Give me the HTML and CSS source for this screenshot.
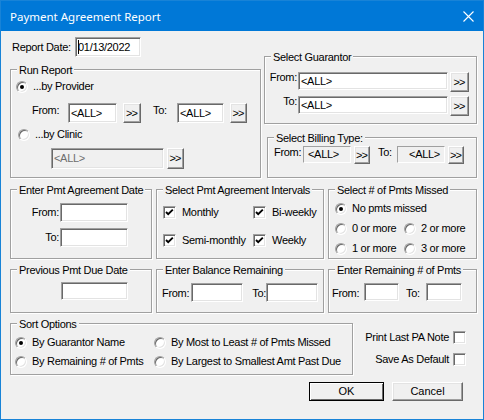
FILE: index.html
```html
<!DOCTYPE html>
<html>
<head>
<meta charset="utf-8">
<title>Payment Agreement Report</title>
<link rel="stylesheet" href="styles.css">
</head>
<body>
<div class="window">
  <div class="titlebar">
    <span class="title">Payment Agreement Report</span>
    <svg class="close" width="11" height="11" viewBox="0 0 11 11"><path d="M0.5 0.5L10.5 10.5M10.5 0.5L0.5 10.5" stroke="#fff" stroke-width="1.1" fill="none"/></svg>
  </div>
  <div class="content">
    <div class="top">
      <div class="left">
        <div class="date-row">
          <span class="date-label">Report Date:</span>
          <span class="field date"><span class="caret"></span>01/13/2022</span>
        </div>
        <div class="group run">
          <span class="legend">Run Report</span>
          <div class="opt prov"><span class="radio on"></span><span>...by Provider</span></div>
          <div class="prov-row">
            <span class="lbl l-from1">From:</span>
            <span class="field w-p1">&lt;ALL&gt;</span>
            <span class="btn b-p1">&gt;&gt;</span>
            <span class="lbl l-to1">To:</span>
            <span class="field w-p2">&lt;ALL&gt;</span>
            <span class="btn b-p2">&gt;&gt;</span>
          </div>
          <div class="opt clinic"><span class="radio"></span><span>...by Clinic</span></div>
          <div class="clinic-row">
            <span class="field disabled w-clinic">&lt;ALL&gt;</span>
            <span class="btn b-clinic">&gt;&gt;</span>
          </div>
        </div>
      </div>
      <div class="right">
        <div class="group guar">
          <span class="legend">Select Guarantor</span>
          <div class="g-row">
            <span class="lbl g-lbl">From:</span>
            <span class="field w-g">&lt;ALL&gt;</span>
            <span class="btn b-g">&gt;&gt;</span>
          </div>
          <div class="g-row g-row2">
            <span class="lbl g-lbl">To:</span>
            <span class="field w-g">&lt;ALL&gt;</span>
            <span class="btn b-g">&gt;&gt;</span>
          </div>
        </div>
        <div class="group billing">
          <span class="legend">Select Billing Type:</span>
          <div class="bt-row">
            <span class="lbl bt-from">From:</span>
            <span class="field ro w-bt">&lt;ALL&gt;</span>
            <span class="btn b-bt">&gt;&gt;</span>
            <span class="lbl bt-to">To:</span>
            <span class="field ro w-bt right-text">&lt;ALL&gt;</span>
            <span class="btn b-bt">&gt;&gt;</span>
          </div>
        </div>
      </div>
    </div>

    <div class="row2">
      <div class="group c1">
        <span class="legend">Enter Pmt Agreement Date</span>
        <div class="pd-row"><span class="lbl pd-lbl">From:</span><span class="field w-pd"></span></div>
        <div class="pd-row pd-row2"><span class="lbl pd-lbl">To:</span><span class="field w-pd"></span></div>
      </div>
      <div class="group c2">
        <span class="legend">Select Pmt Agreement Intervals</span>
        <div class="intervals">
          <div class="opt"><span class="check on"><svg width="9" height="9" viewBox="0 0 9 9"><polyline points="1,4 3.2,6.2 7.8,1.6" fill="none" stroke="#000" stroke-width="1.9"/></svg></span><span>Monthly</span></div>
          <div class="opt"><span class="check on"><svg width="9" height="9" viewBox="0 0 9 9"><polyline points="1,4 3.2,6.2 7.8,1.6" fill="none" stroke="#000" stroke-width="1.9"/></svg></span><span>Bi-weekly</span></div>
          <div class="opt"><span class="check on"><svg width="9" height="9" viewBox="0 0 9 9"><polyline points="1,4 3.2,6.2 7.8,1.6" fill="none" stroke="#000" stroke-width="1.9"/></svg></span><span>Semi-monthly</span></div>
          <div class="opt"><span class="check on"><svg width="9" height="9" viewBox="0 0 9 9"><polyline points="1,4 3.2,6.2 7.8,1.6" fill="none" stroke="#000" stroke-width="1.9"/></svg></span><span>Weekly</span></div>
        </div>
      </div>
      <div class="group c3">
        <span class="legend">Select # of Pmts Missed</span>
        <div class="missed">
          <div class="opt span2"><span class="radio on"></span><span>No pmts missed</span></div>
          <div class="opt"><span class="radio"></span><span>0 or more</span></div>
          <div class="opt"><span class="radio"></span><span>2 or more</span></div>
          <div class="opt"><span class="radio"></span><span>1 or more</span></div>
          <div class="opt"><span class="radio"></span><span>3 or more</span></div>
        </div>
      </div>
    </div>

    <div class="row3">
      <div class="group c1">
        <span class="legend">Previous Pmt Due Date</span>
        <span class="field w-prev"></span>
      </div>
      <div class="group c2">
        <span class="legend">Enter Balance Remaining</span>
        <div class="r3-row bal">
          <span class="lbl bal-from">From:</span>
          <span class="field w-bal"></span>
          <span class="lbl bal-to">To:</span>
          <span class="field w-bal"></span>
        </div>
      </div>
      <div class="group c3">
        <span class="legend">Enter Remaining # of Pmts</span>
        <div class="r3-row rem">
          <span class="lbl rem-from">From:</span>
          <span class="field w-rem"></span>
          <span class="lbl rem-to">To:</span>
          <span class="field w-rem2"></span>
        </div>
      </div>
    </div>

    <div class="bottom">
      <div class="group sort">
        <span class="legend">Sort Options</span>
        <div class="sort-grid">
          <div class="opt"><span class="radio on"></span><span>By Guarantor Name</span></div>
          <div class="opt"><span class="radio"></span><span>By Most to Least # of Pmts Missed</span></div>
          <div class="opt"><span class="radio"></span><span>By Remaining # of Pmts</span></div>
          <div class="opt"><span class="radio"></span><span>By Largest to Smallest Amt Past Due</span></div>
        </div>
      </div>
      <div class="extras">
        <div class="opt rtl"><span>Print Last PA Note</span><span class="check"></span></div>
        <div class="opt rtl second"><span>Save As Default</span><span class="check"></span></div>
      </div>
    </div>

    <div class="buttons">
      <span class="btn push default">OK</span>
      <span class="btn push">Cancel</span>
    </div>
  </div>
</div>
</body>
</html>
```

FILE: styles.css
```css
* { box-sizing: border-box; }
html, body { margin: 0; padding: 0; }
body {
  width: 484px; height: 420px; overflow: hidden;
  background: #f0f0f0;
  font-family: "Liberation Sans", Arial, sans-serif;
  font-size: 11px; line-height: 13px; color: #000;
  letter-spacing: -0.3px;
}
.window {
  width: 484px; height: 420px;
  border: 1px solid #1883d7;
  background: #f0f0f0;
}
.titlebar {
  height: 30px; background: #0078d7; color: #fff;
  display: flex; align-items: center; justify-content: space-between;
  padding: 0 9px 0 9px;
  font-family: "Noto Sans", "Liberation Sans", sans-serif;
  font-size: 11.5px; letter-spacing: 0;
}
.close { display: block; }
.content { padding: 0 6px 0 9px; }

/* generic controls */
.lbl { display: block; white-space: nowrap; flex: none; }
.field {
  display: flex; align-items: center; flex: none;
  background: #fff;
  border: 1px solid; border-color: #a0a0a0 #fff #fff #a0a0a0;
  box-shadow: inset 1px 1px 0 #696969, inset -1px -1px 0 #e3e3e3;
  padding: 0 2px; white-space: nowrap; overflow: hidden;
}
.field.ro { background: #f0f0f0; box-shadow: none; padding-left: 4px; }
.field.right-text { justify-content: flex-end; padding-right: 4px; }
.field.disabled { background: #f0f0f0; color: #6d6d6d; }
.btn {
  display: flex; align-items: center; justify-content: center; flex: none;
  background: #f0f0f0;
  border: 1px solid; border-color: #fff #696969 #696969 #fff;
  box-shadow: inset -1px -1px 0 #a0a0a0, inset 1px 1px 0 #e3e3e3;
  letter-spacing: -1px; padding-right: 1px;
}
.radio {
  display: block; flex: none; position: relative;
  width: 12px; height: 12px; border-radius: 50%;
  background: #fff;
  border: 1px solid; border-color: #a0a0a0 #fff #fff #a0a0a0;
  box-shadow: inset 1px 1px 0 #696969, inset -1px -1px 0 #e3e3e3;
}
.radio.on::after {
  content: ""; position: absolute; left: 3px; top: 3px;
  width: 4px; height: 4px; border-radius: 50%; background: #000;
}
.check {
  display: flex; align-items: center; justify-content: center; flex: none;
  width: 13px; height: 13px; background: #fff;
  border: 1px solid; border-color: #a0a0a0 #fff #fff #a0a0a0;
  box-shadow: inset 1px 1px 0 #696969, inset -1px -1px 0 #e3e3e3;
}
.check svg { display: block; }
.opt { display: flex; align-items: center; height: 13px; white-space: nowrap; }
.opt .radio + span { margin-left: 5px; }
.opt .check + span { margin-left: 6px; }

/* group boxes */
.group {
  position: relative; flex: none;
  border: 1px solid #a0a0a0;
  box-shadow: inset 1px 1px 0 #fff, 1px 1px 0 #fff;
}
.legend {
  position: absolute; top: -6px; left: 6px;
  padding: 0 2px; background: #f0f0f0; white-space: nowrap;
  line-height: 13px;
}

/* top area */
.top { display: flex; gap: 3px; }
.left { width: 251px; flex: none; }
.right { width: 213px; flex: none; }
.date-row { margin-top: 6px; height: 20px; display: flex; align-items: center; }
.date-label { margin-left: 2px; width: 63px; }
.field.date { width: 66px; height: 20px; padding-left: 2px; }
.caret { display: block; width: 1px; height: 14px; background: #000; margin-right: -1px; flex: none; }

.run { margin-top: 12px; width: 251px; height: 109px; }
.opt.prov { margin-top: 10px; padding-left: 5px; }
.prov-row { margin-top: 10px; height: 20px; display: flex; align-items: flex-start; padding-left: 21px; }
.prov-row .lbl { margin-top: 1px; }
.l-from1 { width: 36px; }
.w-p1 { width: 49px; height: 20px; }
.b-p1 { margin-left: 6px; width: 18px; height: 20px; }
.l-to1 { margin-left: 12px; width: 24px; }
.w-p2 { width: 47px; height: 20px; }
.b-p2 { margin-left: 6px; width: 17px; height: 20px; }
.opt.clinic { margin-top: 5px; padding-left: 7px; }
.clinic-row { margin-top: 7px; display: flex; padding-left: 40px; }
.w-clinic { width: 113px; height: 21px; }
.b-clinic { margin-left: 3px; width: 17px; height: 21px; }

.guar { margin-top: 25px; width: 213px; height: 68px; }
.g-row { margin-top: 15px; display: flex; align-items: flex-start; }
.g-row2 { margin-top: 4px; }
.g-lbl { width: 32px; text-align: right; margin-top: -1px; }
.w-g { margin-left: 1px; width: 150px; height: 18px; }
.b-g { margin-left: 2px; width: 19px; height: 20px; }

.billing { margin-top: 13px; margin-left: 3px; width: 210px; height: 41px; }
.bt-row { margin-top: 8px; padding-left: 6px; display: flex; align-items: flex-start; }
.bt-row .lbl { margin-top: 0; }
.bt-from { width: 29px; }
.w-bt { width: 48px; height: 17px; }
.b-bt { margin-left: 3px; width: 16px; height: 18px; }
.bt-to { margin-left: 8px; width: 19px; }

/* middle rows */
.row2 { margin-top: 11px; display: flex; gap: 4px; }
.row2 .group { height: 70px; }
.c1 { width: 142px; }
.c2 { width: 168px; }
.c3 { width: 149px; }
.pd-row { margin-top: 13px; display: flex; align-items: flex-start; }
.pd-row2 { margin-top: 6px; }
.pd-lbl { width: 48px; text-align: right; margin-top: 3px; }
.w-pd { margin-left: 1px; width: 68px; height: 19px; }

.intervals {
  padding: 16px 0 0 6px;
  display: grid; grid-template-columns: 90px auto; row-gap: 15px;
}
.missed {
  padding: 12px 0 0 6px;
  display: grid; grid-template-columns: 69px auto; row-gap: 7px;
}
.span2 { grid-column: 1 / 3; }

.row3 { margin-top: 10px; display: flex; gap: 4px; }
.row3 .group { height: 44px; }
.w-prev { margin: 12px 0 0 50px; width: 67px; height: 18px; }
.r3-row { margin-top: 13px; display: flex; align-items: flex-start; }
.r3-row .lbl { margin-top: 4px; }
.bal { padding-left: 5px; }
.bal-from { width: 29px; }
.w-bal { width: 52px; height: 19px; }
.bal-to { width: 23px; text-align: right; }
.rem { padding-left: 3px; }
.rem-from { width: 32px; }
.w-rem { width: 35px; height: 18px; }
.rem-to { margin-left: 7px; width: 20px; }
.w-rem2 { width: 36px; height: 18px; }

/* bottom */
.bottom { margin-top: 10px; display: flex; }
.sort { width: 343px; height: 52px; }
.sort-grid {
  padding: 12px 0 0 4px;
  display: grid; grid-template-columns: 139px auto; row-gap: 6px;
}
.extras {
  flex: 1; display: flex; flex-direction: column; align-items: flex-end;
  padding: 8px 11px 0 0;
}
.opt.rtl span:first-child { margin-right: 4px; }
.opt.second { margin-top: 9px; }

.buttons { margin-top: 7px; display: flex; justify-content: flex-end; gap: 8px; padding-right: 14px; }
.btn.push { height: 19px; width: 71px; letter-spacing: 0; padding: 0; }
.btn.default { width: 75px; border-color: #000; box-shadow: inset 1px 1px 0 #fff, inset -1px -1px 0 #696969; }
```
